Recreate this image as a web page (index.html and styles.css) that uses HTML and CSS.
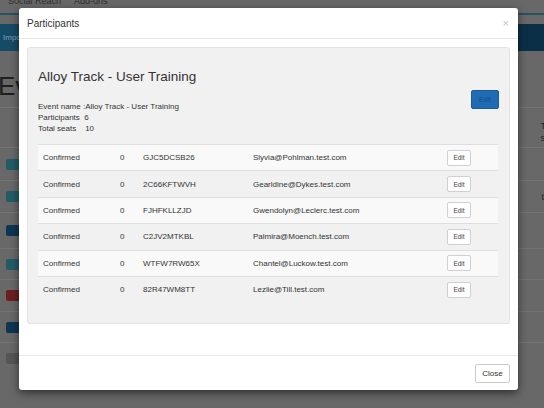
FILE: index.html
```html
<!DOCTYPE html>
<html>
<head>
<meta charset="utf-8">
<title>Participants</title>
<link rel="stylesheet" href="styles.css">
</head>
<body>
<div class="page">
  <div class="topnav"><span>Social Reach</span><span>Add-ons</span></div>
  <div class="navbar"><span class="nav-left">Impo</span><span class="nav-right"></span></div>
  <h1 class="page-title">Eve</h1>
  <div class="bg-table">
    <div class="bg-head"><span class="bg-th">To<br>se</span></div>
    <div class="bg-row r1"><i class="bg-btn teal"></i></div>
    <div class="bg-row r2"><i class="bg-btn teal"></i><span class="bg-td">t</span></div>
    <div class="bg-row r3"><i class="bg-btn navy"></i></div>
    <div class="bg-row r4"><i class="bg-btn teal"></i></div>
    <div class="bg-row r5"><i class="bg-btn red"></i></div>
    <div class="bg-row r6"><i class="bg-btn navy"></i></div>
    <div class="bg-row r7"><i class="bg-btn grey"></i></div>
  </div>
</div>

<div class="modal">
  <div class="modal-header">
    <span class="modal-title">Participants</span>
    <span class="close">×</span>
  </div>
  <div class="modal-body">
    <div class="well">
      <div class="well-top">
        <div class="event-info">
          <h2 class="event-title">Alloy Track - User Training</h2>
          <div class="info-lines">
            <div>Event name :Alloy Track - User Training</div>
            <div>Participants&nbsp; 6</div>
            <div>Total seats &nbsp;&nbsp; 10</div>
          </div>
        </div>
        <button class="btn-primary">Edit</button>
      </div>
      <div class="ptable">
        <div class="prow"><span>Confirmed</span><span>0</span><span>GJC5DCSB26</span><span>Slyvia@Pohlman.test.com</span><span><button class="btn-sm">Edit</button></span></div>
        <div class="prow"><span>Confirmed</span><span>0</span><span>2C66KFTWVH</span><span>Gearldine@Dykes.test.com</span><span><button class="btn-sm">Edit</button></span></div>
        <div class="prow"><span>Confirmed</span><span>0</span><span>FJHFKLLZJD</span><span>Gwendolyn@Leclerc.test.com</span><span><button class="btn-sm">Edit</button></span></div>
        <div class="prow"><span>Confirmed</span><span>0</span><span>C2JV2MTKBL</span><span>Palmira@Moench.test.com</span><span><button class="btn-sm">Edit</button></span></div>
        <div class="prow"><span>Confirmed</span><span>0</span><span>WTFW7RW65X</span><span>Chantel@Luckow.test.com</span><span><button class="btn-sm">Edit</button></span></div>
        <div class="prow"><span>Confirmed</span><span>0</span><span>82R47WM8TT</span><span>Lezlie@Till.test.com</span><span><button class="btn-sm">Edit</button></span></div>
      </div>
    </div>
  </div>
  <div class="modal-footer">
    <button class="btn-default">Close</button>
  </div>
</div>
</body>
</html>
```

FILE: styles.css
```css
* { box-sizing: border-box; }
html, body { margin: 0; padding: 0; }
body {
  width: 544px;
  height: 408px;
  overflow: hidden;
  background: #686868;
  font-family: "Liberation Sans", Arial, sans-serif;
  position: relative;
}

/* ---------- dimmed page behind the overlay ---------- */
.page { width: 544px; height: 408px; overflow: hidden; }
.topnav {
  height: 15px;
  border-bottom: 2px solid #24535f;
  display: flex;
  gap: 13px;
  padding-left: 8px;
  font-size: 9px;
  line-height: 8px;
  color: #2c2c2c;
  overflow: hidden;
}
.topnav span { margin-top: -3px; }
.navbar {
  margin-top: 9px;
  height: 27px;
  display: flex;
}
.nav-left {
  flex: 1;
  background: #174a66;
  color: #7f9fb2;
  font-size: 8px;
  line-height: 27px;
  padding-left: 3px;
}
.nav-right { width: 28px; background: #0c2f48; }
.page-title {
  margin: 0;
  height: 56px;
  padding-top: 22px;
  margin-left: -2px;
  font-size: 26px;
  line-height: 26px;
  font-weight: normal;
  color: #1f1f1f;
}
.bg-table { border-top: 1px solid #747474; }
.bg-head {
  height: 39px;
  display: flex;
  justify-content: flex-end;
  align-items: center;
  padding-top: 8px;
}
.bg-th { font-size: 9px; line-height: 12px; color: #222; margin-right: -6px; }
.bg-row {
  border-top: 1px solid #747474;
  display: flex;
  align-items: center;
  justify-content: space-between;
  padding-left: 6px;
}
.r1 { height: 33px; }
.r2 { height: 32px; }
.r3 { height: 36px; }
.r4 { height: 31px; }
.r5 { height: 32px; }
.r6 { height: 31px; }
.r7 { height: 32px; }
.bg-btn { display: block; width: 16px; height: 11px; border-radius: 2px; }
.teal { background: #215b66; }
.navy { background: #0f3552; }
.red { background: #6b1f20; }
.grey { background: #555; }
.bg-td { font-size: 9px; color: #222; }

/* ---------- modal ---------- */
.modal {
  position: absolute;
  left: 19px;
  top: 8px;
  width: 499px;
  height: 382px;
  background: #fff;
  border-radius: 3px;
  box-shadow: 0 3px 8px rgba(0, 0, 0, 0.55);
  display: flex;
  flex-direction: column;
  color: #333;
}
.modal-header {
  height: 31px;
  padding: 0 8px;
  border-bottom: 1px solid #e8e8e8;
  display: flex;
  align-items: center;
  justify-content: space-between;
}
.modal-title { font-size: 10px; color: #333; }
.close { font-size: 11px; color: #c4c4c4; margin-right: 1px; }
.modal-body { flex: 1; padding: 8px 8px 0; }
.well {
  height: 277px;
  background: #f1f1f1;
  border: 1px solid #e3e3e3;
  border-radius: 3px;
  padding: 20px 11px 0 10px;
}
.well-top { display: flex; justify-content: space-between; align-items: flex-start; }
.event-title {
  margin: 0;
  font-size: 13.5px;
  line-height: 18px;
  font-weight: normal;
  color: #333;
}
.info-lines {
  margin-top: 15px;
  font-size: 8px;
  line-height: 11px;
  color: #333;
}
.btn-primary {
  margin-top: 22px;
  margin-right: -1px;
  width: 28px;
  height: 19px;
  padding: 0;
  background: #1f6bb4;
  border: 1px solid #1a5b9b;
  border-radius: 2px;
  font-family: inherit;
  font-size: 7px;
  color: #15508a;
}
.ptable { margin-top: 10px; }
.prow {
  display: grid;
  grid-template-columns: 77px 23px 110px 194px 1fr;
  align-items: center;
  height: 26.4px;
  border-top: 1px solid #dedede;
  font-size: 8px;
  color: #333;
}
.prow:nth-child(odd) { background: #f9f9f9; }
.prow > span { padding-left: 5px; }
.btn-sm {
  width: 24px;
  height: 16px;
  padding: 0;
  background: #fff;
  border: 1px solid #d0d0d0;
  border-radius: 2px;
  font-family: inherit;
  font-size: 6.5px;
  color: #444;
}
.modal-footer {
  height: 35px;
  border-top: 1px solid #e8e8e8;
  padding: 0 8px;
  display: flex;
  align-items: center;
  justify-content: flex-end;
}
.btn-default {
  width: 35px;
  height: 19px;
  padding: 0;
  background: #fff;
  border: 1px solid #ccc;
  border-radius: 2px;
  font-family: inherit;
  font-size: 8px;
  color: #333;
}
```
